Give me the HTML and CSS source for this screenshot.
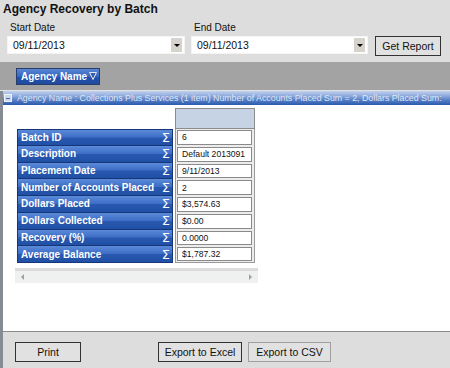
FILE: index.html
```html
<!DOCTYPE html>
<html lang="en">
<head>
    <meta charset="UTF-8">
    <title>Agency Recovery by Batch</title>
    <link rel="stylesheet" href="styles.css">
</head>
<body>

<div class="report">
    <div class="top">
        <h1 class="title">Agency Recovery by Batch</h1>
        <div class="filters">
            <div class="field">
                <label class="field-label">Start Date</label>
                <div class="combo"><span class="combo-text">09/11/2013</span><span class="combo-btn"></span></div>
            </div>
            <div class="field field-end">
                <label class="field-label">End Date</label>
                <div class="combo"><span class="combo-text">09/11/2013</span><span class="combo-btn"></span></div>
            </div>
            <button class="btn btn-report">Get Report</button>
        </div>
    </div>

    <div class="band">
        <span class="chip">Agency Name
            <svg class="funnel" width="8" height="8" viewBox="0 0 8 8"><path d="M0.5 0.5 H7.5 L4 7.5 Z" fill="#3a5fa8" stroke="#e4e8f0" stroke-width="1"/></svg>
        </span>
    </div>

    <div class="main">
        <div class="group-bar"><span class="collapse-box"></span>Agency Name : Collections Plus Services (1 item) Number of Accounts Placed Sum = 2, Dollars Placed Sum:</div>

        <div class="pivot">
            <div class="pivot-corner"></div>
            <div class="col-head"></div>

            <div class="row-head">Batch ID<span class="sigma">&Sigma;</span></div>
            <div class="cell"><span class="cell-val">6</span></div>

            <div class="row-head">Description<span class="sigma">&Sigma;</span></div>
            <div class="cell"><span class="cell-val">Default 2013091</span></div>

            <div class="row-head">Placement Date<span class="sigma">&Sigma;</span></div>
            <div class="cell"><span class="cell-val">9/11/2013</span></div>

            <div class="row-head">Number of Accounts Placed<span class="sigma">&Sigma;</span></div>
            <div class="cell"><span class="cell-val">2</span></div>

            <div class="row-head">Dollars Placed<span class="sigma">&Sigma;</span></div>
            <div class="cell"><span class="cell-val">$3,574.63</span></div>

            <div class="row-head">Dollars Collected<span class="sigma">&Sigma;</span></div>
            <div class="cell"><span class="cell-val">$0.00</span></div>

            <div class="row-head">Recovery (%)<span class="sigma">&Sigma;</span></div>
            <div class="cell"><span class="cell-val">0.0000</span></div>

            <div class="row-head">Average Balance<span class="sigma">&Sigma;</span></div>
            <div class="cell cell-last"><span class="cell-val">$1,787.32</span></div>
        </div>

        <div class="hscroll"><span class="arrow arrow-left"></span><span class="arrow arrow-right"></span></div>

        <div class="footer">
            <button class="btn btn-print">Print</button>
            <button class="btn btn-excel">Export to Excel</button>
            <button class="btn btn-csv">Export to CSV</button>
        </div>
    </div>
</div>

</body>
</html>
```

FILE: styles.css
```css
/* Basic styling */
* {
    box-sizing: border-box;
}
body {
    margin: 0;
    width: 450px;
    height: 368px;
    overflow: hidden;
    font-family: "Liberation Sans", Arial, sans-serif;
    background: #fff;
}
.report {
    display: flex;
    flex-direction: column;
    height: 368px;
}

/* top filter panel */
.top {
    height: 62px;
    background: #dddddd;
    padding-top: 1px;
}
.title {
    margin: 0;
    padding-left: 3px;
    font-size: 12px;
    font-weight: bold;
    line-height: 16px;
    color: #111;
}
.filters {
    display: flex;
    align-items: flex-start;
    margin-top: 5px;
    padding-left: 7px;
}
.field {
    width: 178px;
    margin-right: 6px;
}
.field-end {
    width: 177px;
    margin-right: 7px;
}
.field-label {
    display: block;
    padding-left: 3px;
    margin-bottom: 2px;
    font-size: 10px;
    line-height: 12px;
    color: #111;
}
.combo {
    display: flex;
    align-items: center;
    height: 18px;
    padding: 0 2px 0 5px;
    background: #fff;
    border: 1px solid #f4f4f4;
    font-size: 10.5px;
    color: #111;
}
.combo-text {
    flex: 1;
}
.combo-btn {
    display: flex;
    align-items: center;
    justify-content: center;
    width: 11px;
    height: 14px;
    background: #d6d3cd;
}
.combo-btn::after {
    content: "";
    border-left: 3px solid transparent;
    border-right: 3px solid transparent;
    border-top: 3px solid #000;
}
.btn {
    height: 20px;
    padding: 0;
    background: #e1e1e1;
    border: 1px solid #333;
    font-family: "Liberation Sans", Arial, sans-serif;
    font-size: 10.5px;
    color: #111;
}
.btn-report {
    width: 66px;
    margin-top: 14px;
}

/* field header band */
.band {
    display: flex;
    align-items: center;
    height: 29px;
    padding-left: 16px;
    background: #a3a3a3;
    border-bottom: 1px solid #e2e2e2;
}
.chip {
    display: flex;
    align-items: center;
    justify-content: space-between;
    width: 84px;
    height: 17px;
    padding: 0 2px 0 4px;
    background: linear-gradient(#5a86d4, #3566c0 50%, #2553ab 52%, #1f4aa0);
    border: 1px solid #263f6c;
    font-size: 10px;
    font-weight: bold;
    color: #fff;
}

/* report body */
.main {
    display: flex;
    flex-direction: column;
    flex: 1;
    border-left: 3px solid #868c94;
    background: #fff;
}
.group-bar {
    display: flex;
    align-items: center;
    height: 14px;
    padding-left: 1px;
    overflow: hidden;
    white-space: nowrap;
    background: linear-gradient(#c2d2ee, #8eaadc 35%, #5a82c8 62%, #2c59ad);
    font-size: 8.8px;
    color: #dfe6f4;
}
.collapse-box {
    display: flex;
    align-items: center;
    justify-content: center;
    flex: none;
    width: 8px;
    height: 8px;
    margin-right: 5px;
    background: #cbd7ec;
    border: 1px solid #eef2fa;
}
.collapse-box::after {
    content: "";
    width: 4px;
    height: 1px;
    background: #4a6aa6;
}

.pivot {
    display: grid;
    grid-template-columns: 156px 80px;
    grid-template-rows: 21px repeat(8, 16.75px);
    column-gap: 2px;
    margin: 3px 0 0 14px;
}
.col-head {
    background: #c6d3e4;
    border: 1px solid #8c8c8c;
}
.row-head {
    display: flex;
    align-items: center;
    justify-content: space-between;
    padding: 0 2px 0 3px;
    background: linear-gradient(#5b8ad8, #3d6ec6 48%, #2a58b0 52%, #2050a6);
    border: 1px solid #17367a;
    border-top: none;
    font-size: 10px;
    font-weight: bold;
    color: #fff;
    white-space: nowrap;
}
.row-head:nth-child(3) {
    border-top: 1px solid #17367a;
}
.sigma {
    font-family: "DejaVu Sans", sans-serif;
    font-size: 13px;
    line-height: 13px;
    font-weight: normal;
}
.cell {
    padding: 1px 2px 1px 1px;
    background: #ececec;
    border-left: 1px solid #9a9a9a;
    border-right: 1px solid #9a9a9a;
}
.cell-last {
    border-bottom: 1px solid #9a9a9a;
}
.cell-val {
    display: flex;
    align-items: center;
    height: 100%;
    padding-left: 4px;
    background: #fff;
    border: 1px solid #8a8a8a;
    font-size: 8.6px;
    color: #111;
}

.hscroll {
    display: flex;
    align-items: center;
    justify-content: space-between;
    width: 243px;
    height: 15px;
    margin: 5px 0 0 12px;
    padding: 0 6px;
    background: #eff0f0;
    border-top: 3px solid #dcdcdc;
}
.arrow {
    border-top: 3px solid transparent;
    border-bottom: 3px solid transparent;
}
.arrow-left {
    border-right: 3px solid #a0a0a0;
}
.arrow-right {
    border-left: 3px solid #a0a0a0;
}

/* bottom buttons */
.footer {
    display: flex;
    margin-top: auto;
    height: 37px;
    padding: 10px 0 0 12px;
    background: #dddddd;
    border-top: 1px solid #8a8a8a;
}
.btn-print {
    width: 66px;
}
.btn-excel {
    width: 84px;
    margin-left: 77px;
}
.btn-csv {
    width: 83px;
    margin-left: 6px;
    border-color: #a0a0a0;
}
```
